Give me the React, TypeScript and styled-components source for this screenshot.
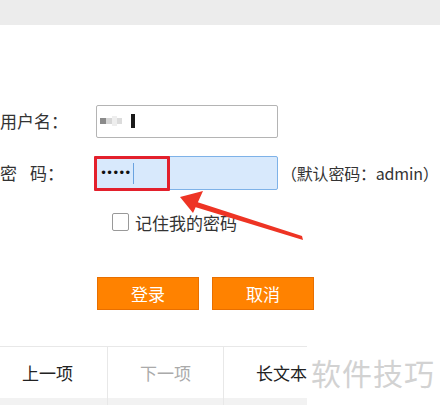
import styled, { createGlobalStyle } from 'styled-components';

const GlobalStyle = createGlobalStyle`
  html, body {
    margin: 0;
    padding: 0;
    background: #fff;
  }
  body {
    font-family: "Noto Sans CJK SC", "Noto Sans", sans-serif;
    color: #333;
  }
`;

const Screen = styled.div`
  position: relative;
  width: 440px;
  height: 405px;
  overflow: hidden;
  background: #fff;
`;

const TopBar = styled.div`
  height: 25px;
  background: #ececec;
`;

const Form = styled.div`
  display: flex;
  flex-direction: column;
  padding-top: 79px;
`;

const Row = styled.div<{ $gap?: number }>`
  display: flex;
  align-items: center;
  height: 34px;
  margin-bottom: ${(p) => p.$gap ?? 0}px;
`;

const Label = styled.div`
  flex: 0 0 96px;
  font-size: 17px;
  line-height: 34px;
  color: #333;
  white-space: pre;
`;

const Spacer = styled.span`
  display: inline-block;
  width: 13px;
`;

const Field = styled.div<{ $focused?: boolean }>`
  position: relative;
  box-sizing: border-box;
  flex: 0 0 182px;
  height: ${(p) => (p.$focused ? 34 : 33)}px;
  border: 1px solid ${(p) => (p.$focused ? '#7eb2e8' : '#b4b4b4')};
  border-radius: 2px;
  background: ${(p) => (p.$focused ? '#d8e9fc' : '#fff')};
  display: flex;
  align-items: center;
  padding-left: 3px;
`;

const Mosaic = styled.div`
  display: flex;
  align-items: center;
`;

const Pixel = styled.span<{ $w: number; $h: number; $c: string; $ml?: number }>`
  display: inline-block;
  width: ${(p) => p.$w}px;
  height: ${(p) => p.$h}px;
  background: ${(p) => p.$c};
  margin-left: ${(p) => p.$ml ?? 0}px;
`;

const Dots = styled.span`
  font-family: "DejaVu Sans", sans-serif;
  font-size: 12px;
  letter-spacing: -1px;
  line-height: 1;
  color: #111;
`;

const Caret = styled.span`
  display: inline-block;
  width: 1px;
  height: 21px;
  margin-left: 3px;
  background: #6aa3e0;
`;

const Hint = styled.div`
  flex: 0 0 auto;
  margin-left: 3px;
  font-size: 16px;
  letter-spacing: -0.2px;
  color: #333;
  white-space: nowrap;
`;

const Remember = styled.label`
  display: flex;
  align-items: center;
  margin: 22px 0 0 112px;
  font-size: 17px;
  color: #333;
  height: 20px;
`;

const Box = styled.span`
  box-sizing: border-box;
  width: 17px;
  height: 18px;
  border: 1px solid #999;
  border-radius: 2px;
  background: #fff;
  margin-right: 6px;
`;

const Buttons = styled.div`
  display: flex;
  gap: 13px;
  margin: 45px 0 0 97px;
`;

const Button = styled.button`
  box-sizing: border-box;
  width: 102px;
  height: 33px;
  border: 1px solid #e86f00;
  background: #ff8200;
  color: #fff;
  font-family: inherit;
  font-size: 17px;
  padding: 0;
`;

const Nav = styled.div`
  position: absolute;
  left: 0;
  right: 0;
  bottom: 0;
  height: 58px;
  border-top: 1px solid #e8e8e8;
  display: grid;
  grid-template-columns: 107px 116px 116px 1fr;
  background: #fff;
  box-shadow: inset 0 -7px 0 #f2f2f2;
`;

const NavItem = styled.div<{ $muted?: boolean; $shift?: number }>`
  display: flex;
  align-items: center;
  justify-content: center;
  padding-bottom: 7px;
  padding-right: ${(p) => p.$shift ?? 0}px;
  border-left: 1px solid #e8e8e8;
  font-size: 17px;
  color: ${(p) => (p.$muted ? '#aaa' : '#222')};
  &:first-child {
    border-left: none;
  }
`;

const Watermark = styled.div`
  position: absolute;
  right: 0;
  bottom: 0;
  width: 133px;
  height: 66px;
  background: #fff;
  display: flex;
  align-items: center;
  padding-left: 4px;
  box-sizing: border-box;
  font-size: 30px;
  color: #d2d2d2;
  letter-spacing: 1px;
  white-space: nowrap;
`;

const Highlight = styled.div`
  position: absolute;
  left: 94px;
  top: 156px;
  width: 76px;
  height: 35px;
  box-sizing: border-box;
  border: 3px solid #e3202c;
  border-radius: 1px;
`;

const Arrow = styled.svg`
  position: absolute;
  left: 0;
  top: 0;
  pointer-events: none;
`;

export default function App() {
  return (
    <Screen>
      <GlobalStyle />
      <TopBar />
      <Form>
        <Row $gap={18}>
          <Label>用户名：</Label>
          <Field>
            <Mosaic>
              <Pixel $w={6} $h={6} $c="#8a8a8a" />
              <Pixel $w={6} $h={6} $c="#d6d6d6" />
              <Pixel $w={5} $h={10} $c="#eeeeee" />
              <Pixel $w={5} $h={6} $c="#dcdcdc" />
              <Pixel $w={4} $h={14} $c="#1a1a1a" $ml={9} />
            </Mosaic>
          </Field>
        </Row>
        <Row>
          <Label>
            密<Spacer />码：
          </Label>
          <Field $focused>
            <Dots>•••••</Dots>
            <Caret />
          </Field>
          <Hint>（默认密码：admin）</Hint>
        </Row>
        <Remember>
          <Box />
          记住我的密码
        </Remember>
        <Buttons>
          <Button>登录</Button>
          <Button>取消</Button>
        </Buttons>
      </Form>
      <Nav>
        <NavItem $shift={12}>上一项</NavItem>
        <NavItem $muted>下一项</NavItem>
        <NavItem>长文本</NavItem>
        <NavItem />
      </Nav>
      <Watermark>软件技巧</Watermark>
      <Highlight />
      <Arrow width="440" height="405" viewBox="0 0 440 405">
        <path d="M302 236 L197 202 L195 207 L303 240 Z" fill="#ee3424" />
        <path d="M180 197 L203 191 L193 213 Z" fill="#ee3424" />
      </Arrow>
    </Screen>
  );
}
